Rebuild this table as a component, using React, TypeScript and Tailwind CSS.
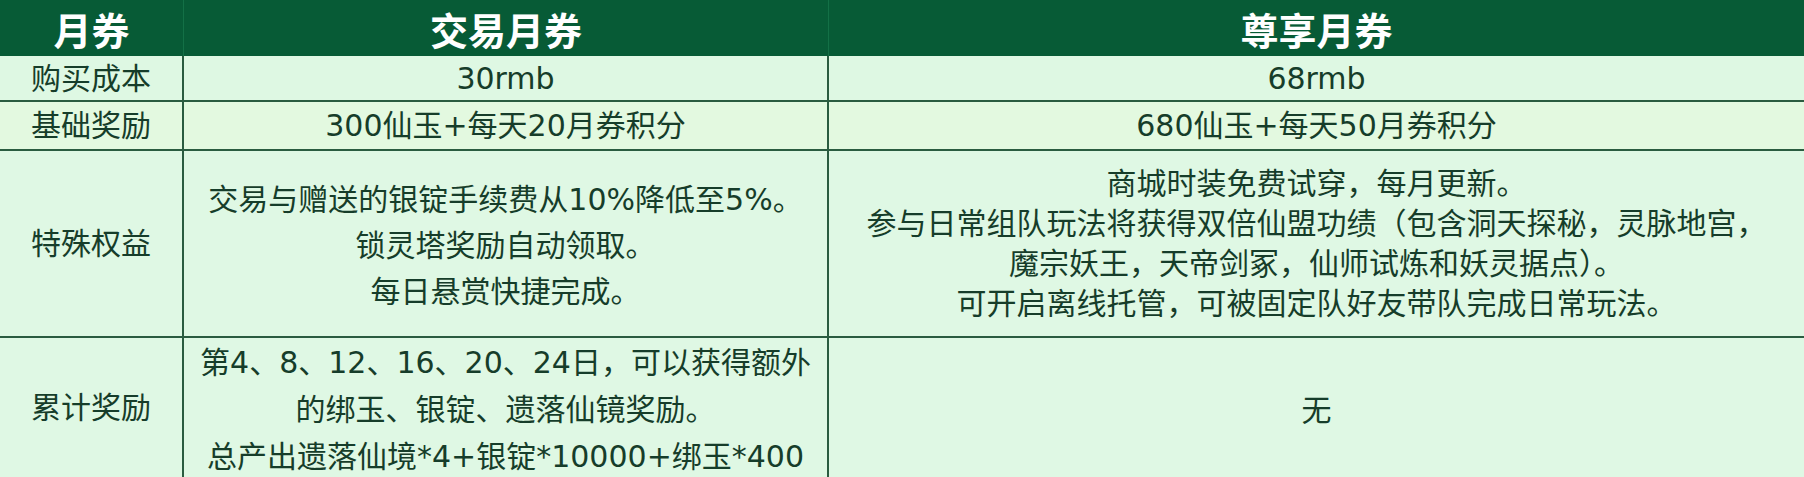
import React from "react";

const font = { fontFamily: '"DejaVu Sans", "Noto Sans CJK SC", sans-serif' };
const headFont = { fontFamily: '"Noto Sans CJK SC", "Noto Sans", sans-serif' };

function Cell({
  children,
  last,
  className = "",
}: {
  children: React.ReactNode;
  last?: boolean;
  className?: string;
}) {
  return (
    <div
      className={`flex flex-col items-center justify-center text-center border-b-2 border-[#2a5c40] ${
        last ? "" : "border-r-2"
      } ${className}`}
    >
      {children}
    </div>
  );
}

export default function App() {
  return (
    <div
      className="w-[1804px] h-[477px] overflow-hidden bg-[#dff8e4] text-[#163d2a]"
      style={font}
    >
      <div className="grid grid-cols-[184px_645px_1fr] grid-rows-[56px_46px_49px_187px_150px]">
        {/* Header */}
        <div
          className="flex items-center justify-center bg-[#075b36] text-white font-bold text-[38px] border-r border-[#137046]"
          style={headFont}
        >
          月券
        </div>
        <div
          className="flex items-center justify-center bg-[#075b36] text-white font-bold text-[38px] border-r border-[#137046]"
          style={headFont}
        >
          交易月券
        </div>
        <div
          className="flex items-center justify-center bg-[#075b36] text-white font-bold text-[38px]"
          style={headFont}
        >
          尊享月券
        </div>

        {/* Row 1 */}
        <Cell className="text-[30px] bg-[#def8e3]">购买成本</Cell>
        <Cell className="text-[30px] bg-[#def8e3]">30rmb</Cell>
        <Cell last className="text-[30px] bg-[#def8e3]">
          68rmb
        </Cell>

        {/* Row 2 */}
        <Cell className="text-[30px] bg-[#e3f9e0]">基础奖励</Cell>
        <Cell className="text-[30px] bg-[#e3f9e0]">300仙玉+每天20月券积分</Cell>
        <Cell last className="text-[30px] bg-[#e3f9e0]">
          680仙玉+每天50月券积分
        </Cell>

        {/* Row 3 */}
        <Cell className="text-[30px]">特殊权益</Cell>
        <Cell className="text-[30px] leading-[46px] pt-1">
          <div>交易与赠送的银锭手续费从10%降低至5%。</div>
          <div>锁灵塔奖励自动领取。</div>
          <div>每日悬赏快捷完成。</div>
        </Cell>
        <Cell last className="text-[30px] leading-[40px]">
          <div>商城时装免费试穿，每月更新。</div>
          <div>参与日常组队玩法将获得双倍仙盟功绩（包含洞天探秘，灵脉地宫，</div>
          <div>魔宗妖王，天帝剑冢，仙师试炼和妖灵据点）。</div>
          <div>可开启离线托管，可被固定队好友带队完成日常玩法。</div>
        </Cell>

        {/* Row 4 */}
        <Cell className="text-[30px] !justify-start pt-[47px]">累计奖励</Cell>
        <Cell className="text-[30px] leading-[47px] !justify-start pt-[1px]">
          <div>第4、8、12、16、20、24日，可以获得额外</div>
          <div>的绑玉、银锭、遗落仙镜奖励。</div>
          <div>总产出遗落仙境*4+银锭*10000+绑玉*400</div>
        </Cell>
        <Cell last className="text-[30px] !justify-start pt-[50px]">
          无
        </Cell>
      </div>
    </div>
  );
}
